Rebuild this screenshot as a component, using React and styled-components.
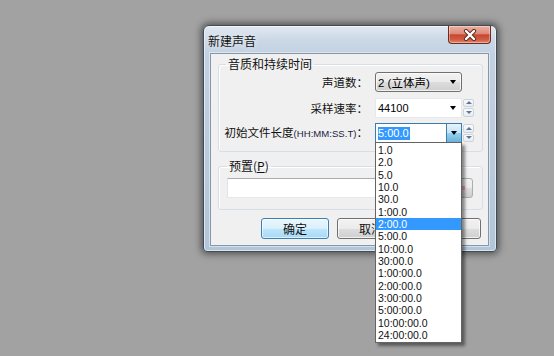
import React from "react"
import styled, { createGlobalStyle } from "styled-components"

const GlobalStyle = createGlobalStyle`
  html, body {
    margin: 0;
    padding: 0;
  }
  body {
    background: #a2a2a2;
    font-family: "Liberation Sans", "Noto Sans CJK SC", sans-serif;
    color: #000;
  }
`

const Desktop = styled.div`
  position: relative;
  width: 554px;
  height: 356px;
  overflow: hidden;
  background: #a2a2a2;
`

const Window = styled.div`
  position: absolute;
  left: 203px;
  top: 25px;
  width: 294px;
  box-sizing: border-box;
  border: 1px solid #414c5a;
  border-radius: 6px 6px 4px 4px;
  padding: 0 7px 5px 6px;
  background: linear-gradient(180deg, #e2e9f1 0px, #cbd8e6 14px, #c2d1e1 28px, #b9cadd 60%, #b2c5d9 100%);
  box-shadow: 0 0 7px 2px rgba(0, 0, 0, 0.5), inset 0 0 0 1px rgba(255, 255, 255, 0.55);
`

const TitleBar = styled.div`
  display: flex;
  align-items: flex-start;
  justify-content: space-between;
  height: 27px;
  margin: 0 -7px 0 -6px;
  padding: 0 5px 0 4px;
`

const Title = styled.div`
  font-family: "Noto Sans CJK SC", sans-serif;
  font-size: 12px;
  line-height: 14px;
  margin-top: 8px;
  color: #111;
  text-shadow: 0 0 6px rgba(255, 255, 255, 0.9);
`

const CloseButton = styled.div`
  width: 43px;
  height: 18px;
  box-sizing: border-box;
  border: 1px solid #6e2b22;
  border-top: none;
  border-radius: 0 0 4px 4px;
  background: linear-gradient(180deg, #ebb1a4 0%, #de8a78 45%, #c8472f 52%, #cf5d43 80%, #e08a6c 100%);
  box-shadow: inset 0 0 0 1px rgba(255, 255, 255, 0.35);
  display: flex;
  align-items: center;
  justify-content: center;
`

const Client = styled.div`
  background: #f0f0f0;
  border: 1px solid #8597ab;
  padding: 3px 5px 6px 7px;
  box-shadow: 0 0 0 1px rgba(255, 255, 255, 0.45);
`

const Group = styled.fieldset`
  margin: ${p => (p.$gap ? "7px 0 0" : "0")};
  min-width: 0;
  border: 1px solid #d5dfe5;
  border-radius: 3px;
  box-shadow: inset 1px 1px 0 #fff;
  padding: ${p => p.$pad};
`

const Legend = styled.legend`
  padding: 0 2px;
  font-family: "Noto Sans CJK SC", sans-serif;
  font-size: 12px;
  line-height: 14px;
  color: #111;
  u {
    text-underline-offset: 1px;
  }
`

const Grid = styled.div`
  display: grid;
  grid-template-columns: 148px 87px 11px;
  grid-auto-rows: 20px;
  column-gap: 1px;
  row-gap: 5.5px;
`

const Label = styled.div`
  justify-self: end;
  align-self: center;
  padding-right: 6px;
  font-family: "Noto Sans CJK SC", sans-serif;
  font-size: 11.5px;
  line-height: 14px;
  white-space: nowrap;
  color: #111;
`

const Small = styled.span`
  font-family: "Liberation Sans", sans-serif;
  font-size: 9.6px;
  color: #1b2240;
`

const Arrow = styled.span`
  width: 0;
  height: 0;
  border-left: 3.5px solid transparent;
  border-right: 3.5px solid transparent;
  border-top: 4px solid ${p => p.$color || "#000"};
`

const SelectBox = styled.div`
  display: flex;
  align-items: center;
  justify-content: space-between;
  box-sizing: border-box;
  border: 1px solid #707070;
  border-radius: 3px;
  padding: 0 5px 0 2px;
  background: linear-gradient(180deg, #f2f2f2 0%, #ebebeb 50%, #dddddd 51%, #cfcfcf 100%);
  box-shadow: inset 0 0 0 1px rgba(255, 255, 255, 0.7);
  font-family: "Liberation Sans", "Noto Sans CJK SC", sans-serif;
  font-size: 11.5px;
`

const Combo = styled.div`
  position: relative;
  display: flex;
  align-items: center;
  justify-content: space-between;
  box-sizing: border-box;
  border: 1px solid ${p => (p.$focus ? "#3d7bad" : "#e6e8ee")};
  background: #fff;
  padding-left: 2px;
  padding-right: ${p => (p.$focus ? "0" : "5px")};
  font-size: 11px;
`

const Selected = styled.span`
  background: #3399ff;
  color: #fff;
  line-height: 13px;
  padding: 0 1px 0 0;
`

const DropButton = styled.div`
  align-self: stretch;
  width: 14px;
  display: flex;
  align-items: center;
  justify-content: center;
  border-left: 1px solid #3c7fb1;
  background: linear-gradient(180deg, #e5f4fc 0%, #c4e5f6 50%, #98d1ef 51%, #68b3db 100%);
`

const Spin = styled.div`
  display: flex;
  flex-direction: column;
  gap: 1px;
  padding: 1px 0;
`

const SpinButton = styled.div`
  flex: 1;
  display: flex;
  align-items: center;
  justify-content: center;
  border: 1px solid #cdd3da;
  border-radius: 2px;
  background: linear-gradient(180deg, #fbfbfb, #e9ecef);
`

const SpinArrow = styled.span`
  width: 0;
  height: 0;
  border-left: 3px solid transparent;
  border-right: 3px solid transparent;
  ${p => (p.$up ? "border-bottom: 3px solid #5c77a0;" : "border-top: 3px solid #5c77a0;")}
`

const DropList = styled.ul`
  position: absolute;
  top: 100%;
  left: -1px;
  right: -1px;
  z-index: 5;
  margin: 0;
  padding: 1px 0;
  list-style: none;
  background: #fff;
  border: 1px solid #646464;
  box-shadow: 3px 3px 3px rgba(0, 0, 0, 0.45);
`

const Item = styled.li`
  height: 12.33px;
  line-height: 12.33px;
  padding-left: 2px;
  font-size: 10.5px;
  color: ${p => (p.$active ? "#fff" : "#111")};
  background: ${p => (p.$active ? "#3399ff" : "transparent")};
  white-space: nowrap;
`

const PresetRow = styled.div`
  display: flex;
  gap: 3px;
  height: 20px;
`

const TextField = styled.div`
  flex: 1;
  background: #fff;
  border: 1px solid #abadb3;
  border-color: #abadb3 #dbdfe6 #e3e9ef #e2e3ea;
`

const IconButton = styled.div`
  width: 29px;
  box-sizing: border-box;
  border: 1px solid #adadad;
  border-radius: 3px;
  background: linear-gradient(180deg, #f2f2f2 0%, #ebebeb 50%, #dddddd 51%, #cfcfcf 100%);
  display: flex;
  align-items: center;
  justify-content: center;
`

const Dash = styled.span`
  width: 13px;
  height: 4px;
  background: #f3a3a3;
`

const Buttons = styled.div`
  display: flex;
  justify-content: flex-end;
  gap: 8px;
  margin-top: 8px;
  padding-right: 2px;
`

const Button = styled.div`
  width: 68px;
  height: 21px;
  box-sizing: border-box;
  display: flex;
  align-items: center;
  justify-content: center;
  border: 1px solid ${p => (p.$primary ? "#3c7fb1" : "#707070")};
  border-radius: 3px;
  background: ${p =>
    p.$primary
      ? "linear-gradient(180deg, #eaf6fd 0%, #d9f0fc 50%, #bee6fd 51%, #a7d9f5 100%)"
      : "linear-gradient(180deg, #f2f2f2 0%, #ebebeb 50%, #dddddd 51%, #cfcfcf 100%)"};
  box-shadow: inset 0 0 0 1px ${p => (p.$primary ? "rgba(255,255,255,0.6)" : "rgba(255,255,255,0.7)")};
  font-family: "Noto Sans CJK SC", sans-serif;
  font-size: 12px;
  color: #111;
`

const lengths = [
  "1.0", "2.0", "5.0", "10.0", "30.0", "1:00.0", "2:00.0", "5:00.0",
  "10:00.0", "30:00.0", "1:00:00.0", "2:00:00.0", "3:00:00.0", "5:00:00.0",
  "10:00:00.0", "24:00:00.0",
]

function SpinBox() {
  return (
    <Spin>
      <SpinButton><SpinArrow $up /></SpinButton>
      <SpinButton><SpinArrow /></SpinButton>
    </Spin>
  )
}

export default function App() {
  return (
    <Desktop>
      <GlobalStyle />
      <Window>
        <TitleBar>
          <Title>新建声音</Title>
          <CloseButton>
            <svg width="14" height="12" viewBox="0 0 14 12">
              <path d="M3 2 L11 10 M11 2 L3 10" stroke="#5a2a22" strokeWidth="4.2" strokeLinecap="round" />
              <path d="M3 2 L11 10 M11 2 L3 10" stroke="#fff" strokeWidth="2.4" strokeLinecap="round" />
            </svg>
          </CloseButton>
        </TitleBar>
        <Client>
          <Group $pad="1px 9px 8px 7px">
            <Legend>音质和持续时间</Legend>
            <Grid>
              <Label>声道数：</Label>
              <SelectBox>
                <span>2 (立体声)</span>
                <Arrow />
              </SelectBox>
              <span />
              <Label>采样速率：</Label>
              <Combo>
                <span>44100</span>
                <Arrow />
              </Combo>
              <SpinBox />
              <Label>初始文件长度<Small>(HH:MM:SS.T)</Small>：</Label>
              <Combo $focus>
                <Selected>5:00.0</Selected>
                <DropButton><Arrow /></DropButton>
                <DropList>
                  {lengths.map(v => (
                    <Item key={v} $active={v === "2:00.0"}>{v}</Item>
                  ))}
                </DropList>
              </Combo>
              <SpinBox />
            </Grid>
          </Group>
          <Group $gap $pad="5px 9px 11px 8px">
            <Legend>预置(<u>P</u>)</Legend>
            <PresetRow>
              <TextField />
              <IconButton><Dash /></IconButton>
            </PresetRow>
          </Group>
          <Buttons>
            <Button $primary>确定</Button>
            <Button>取消</Button>
            <Button>帮助</Button>
          </Buttons>
        </Client>
      </Window>
    </Desktop>
  )
}
